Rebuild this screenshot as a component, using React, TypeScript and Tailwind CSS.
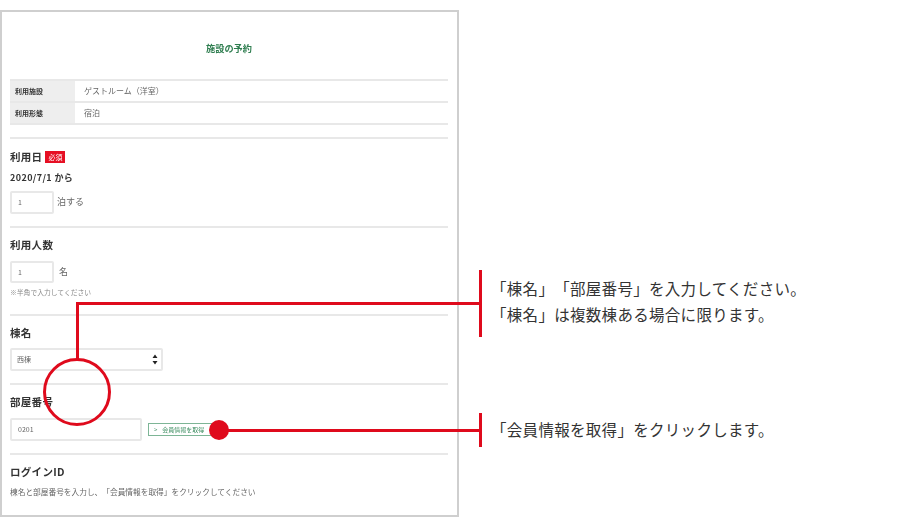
export default function App() {
  const divider = "h-[2px] bg-[#e8e8e8]";
  const heading = "text-[10.5px] leading-[14px] font-bold text-[#333] tracking-[0.3px]";
  return (
    <div className="relative w-[900px] h-[526px] bg-white overflow-hidden [text-spacing-trim:space-all] font-['Noto_Sans_CJK_JP','Noto_Sans',sans-serif]">
      <div className="ml-0 mt-[10px] inline-block w-[459px] h-[507px] border-2 border-[#cfcfcf] pl-[8px] pr-[9px] align-top blur-[0.35px]">
        <div className="pt-[29px] h-[67px] text-center text-[9.2px] leading-[14px] font-bold text-[#2e7d4f]">施設の予約</div>
        <div className="border-t-2 border-[#e8e8e8]">
          <div className="flex h-[22px] border-b-2 border-[#e8e8e8]">
            <div className="w-[65px] bg-[#eeeeee] pl-[5px] text-[7px] leading-[20px] font-bold text-[#333]">利用施設</div>
            <div className="pl-[9px] text-[8px] leading-[20px] text-[#666]">ゲストルーム（洋室）</div>
          </div>
          <div className="flex h-[22px] border-b-2 border-[#e8e8e8]">
            <div className="w-[65px] bg-[#eeeeee] pl-[5px] text-[7px] leading-[20px] font-bold text-[#333]">利用形態</div>
            <div className="pl-[9px] text-[8px] leading-[20px] text-[#666]">宿泊</div>
          </div>
        </div>
        <div className={`${divider} mt-[12px]`} />
        <div className="mt-[11px] flex items-center gap-[3px]">
          <span className={heading}>利用日</span>
          <span className="bg-[#e60f23] px-[3px] text-[7px] leading-[12px] text-white">必須</span>
        </div>
        <div className="mt-[7px] text-[9px] leading-[14px] font-bold text-[#333] tracking-[0.4px]">2020/7/1 から</div>
        <div className="mt-[6px] flex items-center gap-[3px]">
          <div className="w-[44px] h-[23px] border-2 border-[#e8e8e8] rounded-[2px] pl-[6px] text-[7px] leading-[19px] text-[#666]">1</div>
          <span className="text-[9px] leading-[14px] pb-[1px] text-[#666]">泊する</span>
        </div>
        <div className={`${divider} mt-[12px]`} />
        <div className={`${heading} mt-[10px]`}>利用人数</div>
        <div className="mt-[9px] flex items-center gap-[5px]">
          <div className="w-[44px] h-[22px] border-2 border-[#e8e8e8] rounded-[2px] pl-[6px] text-[7px] leading-[18px] text-[#666]">1</div>
          <span className="text-[9px] leading-[14px] text-[#666]">名</span>
        </div>
        <div className="mt-[4px] text-[6.8px] leading-[10px] text-[#888]">※半角で入力してください</div>
        <div className={`${divider} mt-[17px]`} />
        <div className={`${heading} mt-[10px]`}>棟名</div>
        <div className="mt-[8px] w-[153px] h-[23px] border-2 border-[#e8e8e8] rounded-[2px] pl-[5px] pr-[3px] flex items-center justify-between text-[7px] text-[#666]">
          <span>西棟</span>
          <svg width="6" height="11" viewBox="0 0 6 11"><path d="M3 0.5 5.5 4H0.5Z M3 10.5 0.5 7H5.5Z" fill="#222" /></svg>
        </div>
        <div className={`${divider} mt-[12px]`} />
        <div className={`${heading} mt-[10px]`}>部屋番号</div>
        <div className="mt-[9px] flex items-center gap-[6px]">
          <div className="w-[132px] h-[23px] border-2 border-[#e8e8e8] rounded-[2px] pl-[6px] text-[7px] leading-[19px] text-[#666]">0201</div>
          <div className="w-[64px] h-[13px] border border-[#7db596] pl-[5px] flex items-center gap-[5px] text-[6px] text-[#3f8f63]">
            <span>&gt;</span><span>会員情報を取得</span>
          </div>
        </div>
        <div className={`${divider} mt-[12px]`} />
        <div className={`${heading} mt-[10px]`}>ログインID</div>
        <div className="mt-[7px] text-[7.7px] leading-[12px] text-[#666] whitespace-nowrap">棟名と部屋番号を入力し、「会員情報を取得」をクリックしてください</div>
      </div>

      <div className="absolute left-[76px] top-[302px] w-[405px] h-[3px] bg-[#df0a1c]" />
      <div className="absolute left-[76px] top-[302px] w-[3px] h-[58px] bg-[#df0a1c]" />
      <div className="absolute left-[43px] top-[358px] w-[68px] h-[68px] rounded-full border-[3px] border-[#df0a1c]" />
      <div className="absolute left-[209px] top-[420px] w-[20px] h-[20px] rounded-full bg-[#df0a1c]" />
      <div className="absolute left-[225px] top-[429px] w-[256px] h-[3px] bg-[#df0a1c]" />
      <div className="absolute left-[479px] top-[270px] w-[3px] h-[67px] bg-[#df0a1c]" />
      <div className="absolute left-[479px] top-[413px] w-[3px] h-[34px] bg-[#df0a1c]" />
      <div className="absolute left-[491px] top-[275px] text-[15.5px] leading-[26px] tracking-[0.3px] text-[#333] whitespace-nowrap">
        <div>「棟名」「部屋番号」を入力してください。</div>
        <div>「棟名」は複数棟ある場合に限ります。</div>
      </div>
      <div className="absolute left-[491px] top-[416px] text-[15.5px] leading-[26px] tracking-[0.3px] text-[#333] whitespace-nowrap">「会員情報を取得」をクリックします。</div>
    </div>
  );
}
